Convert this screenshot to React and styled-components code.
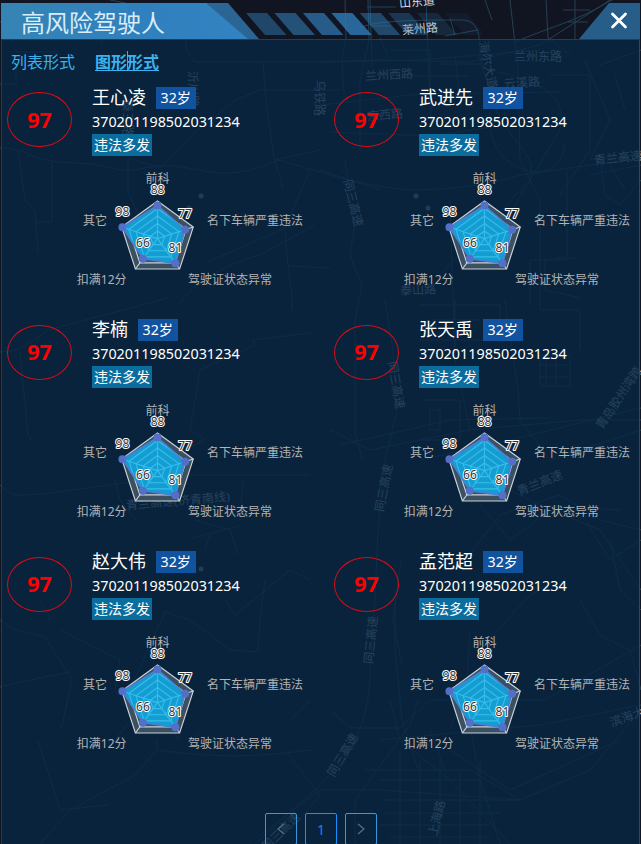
import React from 'react';
import styled, { createGlobalStyle } from 'styled-components';

const Global = createGlobalStyle`
  * { box-sizing: border-box; }
  html, body { margin: 0; background: #101521; overflow: hidden; }
  body { font-family: 'Noto Sans', 'Noto Sans CJK SC', sans-serif; }
`;

const Screen = styled.div`
  position: relative;
  width: 641px;
  height: 844px;
  overflow: hidden;
  background: #101521;
`;

const MapLayer = styled.svg`
  position: absolute;
  inset: 0;
  text { font-family: 'Liberation Serif', 'Noto Sans CJK SC', serif; text-anchor: middle; dominant-baseline: central; }
`;

const Dialog = styled.section`
  position: relative;
  display: flex;
  flex-direction: column;
  width: 639px;
  height: 844px;
  margin-left: 1px;
`;

const Header = styled.header`
  display: flex;
  justify-content: space-between;
  height: 39px;
  padding-top: 3px;
`;

const TitleBar = styled.div`
  position: relative;
  width: 480px;
  height: 36px;
`;

const HeaderShape = styled.svg`
  position: absolute;
  inset: 0;
`;

const Title = styled.h1`
  position: relative;
  margin: 0 0 0 20px;
  font-size: 24px;
  line-height: 39px;
  font-weight: 400;
  color: #d9ecf8;
`;

const CloseButton = styled.button`
  width: 61px;
  height: 36px;
  padding: 0 0 0 19px;
  border: 0;
  background: #265d89;
  clip-path: polygon(30px 0, 100% 0, 100% 100%, 0 100%);
  display: flex;
  align-items: center;
  justify-content: center;
`;

const Body = styled.main`
  flex: 1;
  display: flex;
  flex-direction: column;
  border: 1px solid;
  border-bottom: 0;
  border-color: #19405f #2a4a68 #19405f #203c59;
  background: rgba(7, 39, 67, 0.8);
`;

const Tabs = styled.nav`
  display: flex;
  gap: 20px;
  height: 42px;
  padding: 11px 0 0 9px;
`;

const Tab = styled.a`
  position: relative;
  height: 22px;
  font-size: 16px;
  line-height: 22px;
  color: #3bb2ee;
  font-weight: ${(p) => (p.$active ? 700 : 400)};
  text-decoration: ${(p) => (p.$active ? 'underline' : 'none')};
  text-underline-offset: 2px;
  text-decoration-thickness: 1px;
`;

const Caret = styled.span`
  position: absolute;
  left: 32px;
  top: 0;
  width: 1px;
  height: 20px;
  background: #4aa8d8;
`;

const Grid = styled.div`
  display: grid;
  grid-template-columns: 327px 310px;
  grid-auto-rows: 232px;
`;

const Card = styled.article`
  display: flex;
  flex-direction: column;
`;

const Profile = styled.div`
  display: flex;
  height: 82px;
  padding: 5px 0 0 5px;
`;

const Score = styled.div`
  width: 65px;
  height: 55px;
  margin: ${(p) => (p.$first ? 5 : 6)}px 20px 0 0;
  border: 1px solid #dc0b15;
  border-radius: 50%;
  text-align: center;
  font-size: 21.5px;
  line-height: ${(p) => (p.$first ? 53 : 51)}px;
  font-weight: 700;
  color: #f00;
`;

const Info = styled.div`
  color: #fff;
`;

const NameRow = styled.div`
  display: flex;
  align-items: center;
  gap: 9.5px;
  height: 22px;
  font-size: 18px;
  line-height: 22px;
  white-space: nowrap;
`;

const Name = styled.span`
  height: 24px;
`;

const Age = styled.span`
  height: 22px;
  padding: 0 5.1px;
  background: #1253a0;
  font-size: 14.2px;
  line-height: 21px;
`;

const IdNumber = styled.div`
  height: 25px;
  font-size: 14.35px;
  line-height: 26px;
`;

const RiskTag = styled.div`
  width: 60px;
  height: 22px;
  background: #0b6d9e;
  text-align: center;
  font-size: 14px;
  line-height: 21px;
`;

const RadarSvg = styled.svg`
  display: block;
  width: 310px;
  height: 150px;
  font-size: 12px;
`;

const AxisLabel = styled.text`
  fill: #b3b3b3;
  dominant-baseline: central;
`;

const ValueLabel = styled.text`
  fill: #333;
  stroke: #fff;
  stroke-width: 2px;
  stroke-linejoin: round;
  paint-order: stroke;
  text-anchor: middle;
  dominant-baseline: central;
`;

const Pager = styled.div`
  display: flex;
  gap: 8px;
  margin: 35px 0 0 263px;
`;

const PageButton = styled.button`
  width: 32px;
  height: 32px;
  flex: none;
  padding: 0;
  display: flex;
  align-items: center;
  justify-content: center;
  border: 1px solid ${(p) => (p.$current ? '#1890ff' : '#3798e0')};
  border-radius: 2px;
  background: transparent;
  color: ${(p) => (p.$current ? '#1a84e6' : '#59707f')};
  font: 14px 'Noto Sans', sans-serif;
`;

const CX = 155.5;
const CY = 74.6;
const R = 37.6;
const point = (i, value) => {
  const a = (i * 72 - 90) * (Math.PI / 180);
  const r = (R * value) / 100;
  return [CX + r * Math.cos(a), CY + r * Math.sin(a)];
};
const ring = (values) => values.map((v, i) => point(i, v).join(',')).join(' ');

const axes = [
  { name: '前科', x: 155.5, y: 14.5, anchor: 'middle' },
  { name: '名下车辆严重违法', x: 205, y: 56.5 },
  { name: '驾驶证状态异常', x: 186, y: 115.5 },
  { name: '扣满12分', x: 124.5, y: 115.5, anchor: 'end' },
  { name: '其它', x: 105, y: 56.5, anchor: 'end' },
];

function Radar({ values }) {
  return (
    <RadarSvg viewBox="0 0 310 150">
      <polygon points={ring([100, 100, 100, 100, 100])} fill="#3b5061" />
      {[100, 80, 60, 40, 20].map((v) => (
        <polygon key={v} points={ring([v, v, v, v, v])} fill="none" stroke="#ccd2da" strokeWidth="1.15" />
      ))}
      {values.map((_, i) => {
        const [x, y] = point(i, 100);
        return <line key={i} x1={CX} y1={CY} x2={x} y2={y} stroke="#ccd2da" strokeWidth="1.15" />;
      })}
      <polygon points={ring(values)} fill="#06b6f3" fillOpacity=".76" />
      <polygon points={ring(values)} fill="none" stroke="#4680d6" strokeWidth="1.6" />
      {values.map((v, i) => {
        const [x, y] = point(i, v);
        return <circle key={i} cx={x} cy={y} r="4" fill="#5470c6" />;
      })}
      {axes.map((a) => (
        <AxisLabel key={a.name} x={a.x} y={a.y} textAnchor={a.anchor}>{a.name}</AxisLabel>
      ))}
      {values.map((v, i) => {
        const [x, y] = point(i, v);
        return <ValueLabel key={i} x={x} y={y - 16}>{v}</ValueLabel>;
      })}
    </RadarSvg>
  );
}

const roads = [
  'M110 0C150 8 180 12 186 40V50L195 62H320L380 60L470 62L540 45L610 0',
  'M0 22H100L102 45M0 84H16V60M16 52H58',
  'M0 148C30 148 28 162 75 163C115 164 115 175 145 168C190 157 215 190 278 160C300 165 350 185 410 190C450 190 490 185 520 175L641 158',
  'M18 150L25 200L35 210L38 252M52 162V222H36',
  'M128 158V192L142 222V270M128 158L160 168L195 132L236 100L260 90L340 90',
  'M263 62L266 100L274 158L283 188M275 160L320 150',
  'M178 305C200 275 240 260 260 255L315 225M208 262L285 228L310 170',
  'M285 230L288 266L330 268M288 268L292 295V310',
  'M345 0L346 38L342 60L344 95M368 0L369 40L360 80V150M426 0L428 62L432 130',
  'M360 28C375 20 420 20 462 20C482 20 480 45 480 60L490 90C500 140 540 150 530 180L500 230',
  'M367 7H396M370 26H390M380 38L388 55M450 18L455 35M445 36L478 30',
  'M485 0L492 20M510 0L518 70L520 160L540 200V310M546 0L548 38L570 55',
  'M515 42C550 27 580 20 608 2L641 -14M563 10H590M568 22H588M575 0V40',
  'M320 62L420 60L540 50M320 105L420 94L560 92M330 132L430 136L540 120',
  'M410 50H430V90M390 50H412M412 76H470M455 55L460 98M440 64H488',
  'M585 60L595 85L610 120L590 160L641 155M600 65L641 50M615 75L625 110',
  'M490 70C530 80 570 90 560 130L530 180L440 275M550 75H590V150L560 195',
  'M500 92C480 110 490 155 515 165C540 180 560 170 565 145',
  'M600 160L605 195L620 205L641 180M610 165L625 190M590 175L641 165',
  'M567 170V260H530V305M555 258H575M545 258V290L580 298',
  'M345 160L354 230L350 255L362 285L355 320V430L362 460',
  'M385 300L393 350L397 410L385 460L378 530L375 600L370 670C370 720 355 750 320 785L255 844',
  'M370 0L372 68M320 170L380 190M450 200L455 360L470 430',
  'M420 305H500V340H420M430 320H480M455 300V360M420 400H460V440H420M430 410H440V430H430Z',
  'M540 355H570V386H540ZM546 358V386M556 358V386M540 365H570M540 377H570',
  'M505 300L518 390L520 420L550 460L641 430M540 310H580V350',
  'M0 352C20 350 20 350 48 330L168 298M20 352L28 435L32 442M0 485C15 500 20 494 42 494L110 485L190 475H310',
  'M141 440C140 460 190 450 205 440L190 430L200 370L255 345L253 340L310 333M114 478L120 500L136 520',
  'M195 520L230 530L238 555M192 538L240 526M210 535L205 550M240 520L243 480',
  'M330 430L370 450L470 430L580 420L641 420M420 460L510 440L641 408M340 445L450 420L550 418',
  'M465 560L500 515L560 495L600 520L641 530M510 490L540 505L620 510',
  'M480 505L510 540L550 510L600 530L641 590M470 630L467 680L450 730M610 540L620 590L641 610',
  'M585 520L610 560L641 540M580 600L600 635L630 650L641 690M480 650L525 600L545 585',
  'M395 590V650L402 720L418 770M401 560L393 620L402 665M350 728H400L430 700L545 700L641 645',
  'M350 728L330 710M320 790L380 790L520 800L590 770L641 710M450 750L510 790L620 740',
  'M355 844V800L410 725L418 700M390 700L400 740L450 780L510 844M380 740L540 725L641 705',
  'M365 770H470L520 800M380 780H480L500 844M400 750V844M420 760V844M440 760V844M460 770V844M480 760V844',
  'M380 800H520M385 813H500M380 825H490M390 837H490M430 730L445 770M465 700L480 780',
  'M0 620C20 635 25 631 45 637L72 680L61 730M0 687L30 680L70 672M38 598L52 620',
  'M157 740V750C230 760 270 755 310 750M108 750L145 700L180 740M157 750L135 775L70 810L40 844M38 740L60 810L108 805',
  'M125 700L165 612L190 620L230 650L258 652L260 620L265 580M225 600L235 615L290 570L310 580',
  'M290 720L310 700M285 750L320 795L295 825M260 835L320 790',
  'M60 630L120 660L115 690L141 730M190 744L200 732',
];

const mapLabels = [
  ['山东道', 417, 2, -5, 1], ['莱州路', 420, 29, -5, 1],
  ['兰州东路', 538, 57, 0], ['兰州西路', 389, 75, -3], ['海尔大道', 488, 65, 78],
  ['云溪路', 522, 83, -4], ['京西路', 385, 115, -5], ['青兰高速', 618, 158, -6],
  ['泰山路', 418, 290, -2], ['同三高速', 353, 203, 76], ['同三高速', 396, 385, 80],
  ['同三高速', 384, 488, -79], ['青兰高速', 540, 483, -22], ['青岛胶州湾跨', 619, 398, -56],
  ['青兰高速(济青南线)', 178, 501, -5], ['同三高速', 371, 640, -84],
  ['同三高速', 343, 755, -59], ['上海路', 437, 818, -76], ['滨海大道', 633, 715, -20],
  ['同三高速', 281, 832, -45], ['乌铁路', 319, 98, 90], ['沂川路', 193, 89, 88],
  ['泰三路', 127, 118, 90],
];

function CityMap() {
  return (
    <MapLayer width="641" height="844">
      {roads.map((d) => <path key={d} d={d} fill="none" stroke="#27465a" strokeOpacity=".9" />)}
      {mapLabels.map(([name, x, y, angle, bright]) => (
        <text key={`${name}${x}${y}`} transform={`translate(${x} ${y}) rotate(${angle})`} fontSize="12" fill={bright ? '#d3d9dd' : '#9babb5'}>{name}</text>
      ))}
      {[[201, 196], [189, 208], [416, 196], [428, 208], [201, 569], [189, 569]].map(([x, y]) => (
        <circle key={`${x}-${y}`} cx={x} cy={y} r="2.5" fill="#8798a2" />
      ))}
    </MapLayer>
  );
}

const stripes = [0.5, 0.6, 0.72, 0.82, 0.52, 0.34, 0.19, 0.08];

const people = ['王心凌', '武进先', '李楠', '张天禹', '赵大伟', '孟范超'].map((name) => ({
  name, age: '32岁', id: '370201198502031234', score: 97, tag: '违法多发', values: [88, 77, 81, 66, 98],
}));

export default function App() {
  return (
    <Screen>
      <Global />
      <CityMap />
      <Dialog>
        <Header>
          <TitleBar>
            <HeaderShape width="480" height="36">
              <defs>
                <linearGradient id="bar">
                  <stop stopColor="#3684b3" />
                  <stop offset=".55" stopColor="#3080be" />
                  <stop offset="1" stopColor="#3383c2" />
                </linearGradient>
              </defs>
              <polygon points="0,0 227,0 258,36 0,36" fill="#2b6593" />
              <polygon points="0,0 205,0 247,36 0,36" fill="url(#bar)" />
              {stripes.map((opacity, i) => {
                const x = 245 + i * 28.45;
                return <polygon key={opacity} points={`${x},10 ${x + 21},10 ${x + 40.5},32 ${x + 19},32`} fill="#3079b3" fillOpacity={opacity} />;
              })}
            </HeaderShape>
            <Title>高风险驾驶人</Title>
          </TitleBar>
          <CloseButton aria-label="关闭">
            <svg width="18" height="18" viewBox="0 0 18 18">
              <path d="M2.5 2L15.5 15M15.5 2L2.5 15" stroke="#fff" strokeWidth="2.8" strokeLinecap="round" />
            </svg>
          </CloseButton>
        </Header>
        <Body>
          <Tabs>
            <Tab>列表形式</Tab>
            <Tab $active>图形形式<Caret /></Tab>
          </Tabs>
          <Grid>
            {people.map((p, i) => (
              <Card key={p.name}>
                <Profile>
                  <Score $first={i < 2}>{p.score}</Score>
                  <Info>
                    <NameRow><Name>{p.name}</Name><Age>{p.age}</Age></NameRow>
                    <IdNumber>{p.id}</IdNumber>
                    <RiskTag>{p.tag}</RiskTag>
                  </Info>
                </Profile>
                <Radar values={p.values} />
              </Card>
            ))}
          </Grid>
          <Pager>
            <PageButton aria-label="上一页">
              <svg width="10" height="12" viewBox="0 0 10 12"><path d="M8 1L2 6L8 11" fill="none" stroke="currentColor" strokeWidth="1.2" /></svg>
            </PageButton>
            <PageButton $current>1</PageButton>
            <PageButton aria-label="下一页">
              <svg width="10" height="12" viewBox="0 0 10 12"><path d="M2 1L8 6L2 11" fill="none" stroke="currentColor" strokeWidth="1.2" /></svg>
            </PageButton>
          </Pager>
        </Body>
      </Dialog>
    </Screen>
  );
}
